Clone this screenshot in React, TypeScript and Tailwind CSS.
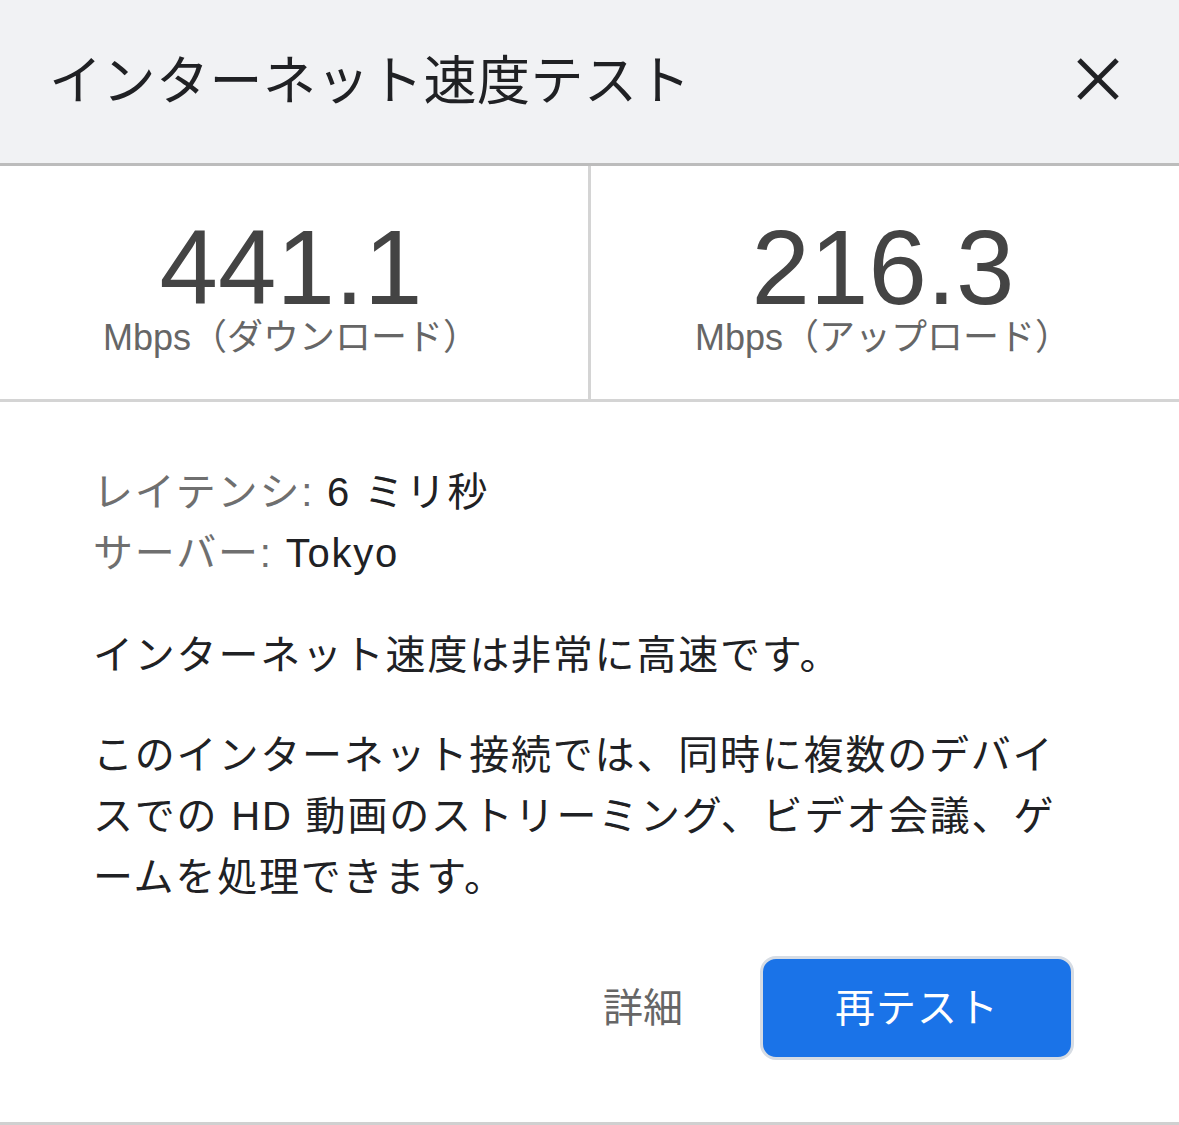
import React from "react";

const font = { fontFamily: '"Liberation Sans", "Noto Sans CJK JP", sans-serif' };

export default function App() {
  return (
    <div className="w-[1179px] h-[1125px] bg-white overflow-hidden" style={font}>
      <div className="h-[166px] bg-[#f1f2f4] border-b-[3px] border-[#bcbcbc] flex items-center justify-between pl-[49px] pr-[60px]">
        <div className="text-[53px] leading-none text-[#202124] tracking-[0.5px]">インターネット速度テスト</div>
        <svg width="42" height="42" viewBox="0 0 42 42" className="mt-[-6px]">
          <line x1="2" y1="2" x2="40" y2="40" stroke="#202124" strokeWidth="5" />
          <line x1="40" y1="2" x2="2" y2="40" stroke="#202124" strokeWidth="5" />
        </svg>
      </div>
      <div className="h-[236px] flex border-b-[3px] border-[#d4d4d4]">
        <div className="w-[591px] border-r-[3px] border-[#d4d4d4] flex flex-col items-center pt-[51px] pr-[6px]">
          <div className="text-[105px] leading-[102px] text-[#444444]">441.1</div>
          <div className="text-[36px] leading-[36px] text-[#666666] mt-[1px]">Mbps（ダウンロード）</div>
        </div>
        <div className="flex-1 flex flex-col items-center pt-[51px] pr-[4px]">
          <div className="text-[105px] leading-[102px] text-[#444444]">216.3</div>
          <div className="text-[36px] leading-[36px] text-[#666666] mt-[1px]">Mbps（アップロード）</div>
        </div>
      </div>
      <div className="pl-[93px] pt-[60px] text-[40px] leading-[61px] text-[#202124] tracking-[1.8px]">
        <div>
          <span className="text-[#6f6f6f]">レイテンシ:</span> 6 ミリ秒
        </div>
        <div>
          <span className="text-[#6f6f6f]">サーバー:</span> Tokyo
        </div>
        <div className="mt-[41px]">インターネット速度は非常に高速です。</div>
        <div className="mt-[39px] whitespace-nowrap">
          このインターネット接続では、同時に複数のデバイ
          <br />
          スでの HD 動画のストリーミング、ビデオ会議、ゲ
          <br />
          ームを処理できます。
        </div>
      </div>
      <div className="flex items-center justify-end pr-[105px] mt-[48px] gap-[77px]">
        <div className="text-[40px] leading-none text-[#666666]">詳細</div>
        <div className="w-[314px] h-[104px] rounded-[16px] border-[3px] border-[#d6dce4] bg-[#1a73e8] flex items-center justify-center text-white text-[40px] leading-none tracking-[1px]">
          再テスト
        </div>
      </div>
      <div className="mt-[62px] border-b-[3px] border-[#d0d0d0]" />
    </div>
  );
}
